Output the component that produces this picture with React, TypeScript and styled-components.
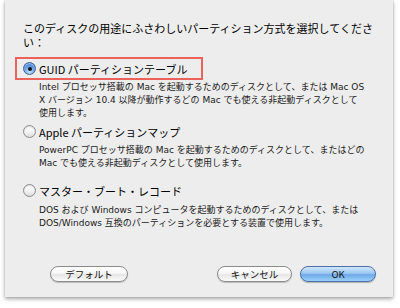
import React from "react";
import styled, { createGlobalStyle, css } from "styled-components";

const Global = createGlobalStyle`
  html, body { margin: 0; padding: 0; background: #ffffff; }
  body { font-family: "Noto Sans CJK JP", "Noto Sans", sans-serif; color: #000; }
`;

const Page = styled.div`
  width: 400px;
  height: 308px;
  padding-left: 5px;
  box-sizing: border-box;
`;

const Sheet = styled.div`
  width: 388px;
  height: 297px;
  box-sizing: border-box;
  background: #ededed;
  box-shadow: 0 2px 4px rgba(0, 0, 0, 0.35), 0 0 1px rgba(0, 0, 0, 0.25);
  display: flex;
  flex-direction: column;
  padding: 21px 0 15px 0;
`;

const Title = styled.div`
  font-size: 11px;
  line-height: 14px;
  padding-left: 18px;
  white-space: nowrap;
  margin-bottom: 8px;
`;

const Option = styled.div<{ $after: number }>`
  display: flex;
  flex-direction: column;
  margin-bottom: ${(p) => p.$after}px;
`;

const Row = styled.div<{ $highlight?: boolean }>`
  display: inline-flex;
  align-items: center;
  align-self: flex-start;
  height: 23px;
  box-sizing: border-box;
  margin-left: 10px;
  padding: 0 14px 0 6px;
  gap: 3px;
  border: 2px solid ${(p) => (p.$highlight ? "#ec6159" : "transparent")};
  font-size: 11px;
`;

const Radio = styled.span<{ $checked?: boolean }>`
  position: relative;
  width: 13px;
  height: 13px;
  box-sizing: border-box;
  border-radius: 50%;
  flex: none;
  ${(p) =>
    p.$checked
      ? css`
          border: 1px solid #42609a;
          background: radial-gradient(circle at 50% 80%, #c6e4ff 0%, #7fb3ef 35%, #3f7fd9 75%, #2f66c0 100%);
          box-shadow: inset 0 1px 1px rgba(255, 255, 255, 0.6);
          &::after {
            content: "";
            position: absolute;
            left: 50%;
            top: 50%;
            width: 4px;
            height: 4px;
            margin: -2px 0 0 -2px;
            border-radius: 50%;
            background: #111;
          }
        `
      : css`
          border: 1px solid #8c8c8c;
          background: linear-gradient(#ffffff, #f2f2f2 55%, #dcdcdc);
          box-shadow: inset 0 1px 1px rgba(0, 0, 0, 0.15);
        `}
`;

const Label = styled.span`
  white-space: nowrap;
  line-height: 14px;
`;

const Desc = styled.div<{ $top: number }>`
  font-family: "DejaVu Sans", "Noto Sans CJK JP", sans-serif;
  font-size: 9px;
  line-height: 13px;
  color: #1a1a1a;
  padding-left: 34px;
  margin-top: ${(p) => p.$top}px;
  white-space: nowrap;
`;

const Footer = styled.div`
  margin-top: auto;
  display: flex;
  justify-content: space-between;
  align-items: center;
  padding: 0 17px 0 45px;
`;

const Group = styled.div`
  display: flex;
  gap: 8px;
`;

const Button = styled.button<{ $primary?: boolean; $w: number }>`
  width: ${(p) => p.$w}px;
  height: 16px;
  box-sizing: border-box;
  border-radius: 8px;
  font-family: "Noto Sans CJK JP", "Noto Sans", sans-serif;
  font-size: 9.5px;
  line-height: 14px;
  padding: 0;
  color: #111;
  cursor: default;
  ${(p) =>
    p.$primary
      ? css`
          border: 1px solid #4c6fa8;
          background: linear-gradient(#cfe6fb 0%, #9cc8f2 45%, #6ea9e8 55%, #9ad0fa 100%);
          box-shadow: 0 1px 1px rgba(0, 0, 0, 0.25);
        `
      : css`
          border: 1px solid #8a8a8a;
          background: linear-gradient(#ffffff 0%, #f6f6f6 45%, #e6e6e6 55%, #fbfbfb 100%);
          box-shadow: 0 1px 1px rgba(0, 0, 0, 0.2);
        `}
`;

export default function App() {
  return (
    <Page>
      <Global />
      <Sheet>
        <Title>
          このディスクの用途にふさわしいパーティション方式を選択してくださ
          <br />い：
        </Title>

        <Option $after={0}>
          <Row $highlight>
            <Radio $checked />
            <Label>GUID パーティションテーブル</Label>
          </Row>
          <Desc $top={1}>
            Intel プロセッサ搭載の Mac を起動するためのディスクとして、または Mac OS
            <br />X バージョン 10.4 以降が動作するどの Mac でも使える非起動ディスクとして
            <br />使用します。
          </Desc>
        </Option>

        <Option $after={9}>
          <Row>
            <Radio />
            <Label>Apple パーティションマップ</Label>
          </Row>
          <Desc $top={1}>
            PowerPC プロセッサ搭載の Mac を起動するためのディスクとして、またはどの
            <br />Mac でも使える非起動ディスクとして使用します。
          </Desc>
        </Option>

        <Option $after={0}>
          <Row>
            <Radio />
            <Label>マスター・ブート・レコード</Label>
          </Row>
          <Desc $top={2}>
            DOS および Windows コンピュータを起動するためのディスクとして、または
            <br />DOS/Windows 互換のパーティションを必要とする装置で使用します。
          </Desc>
        </Option>

        <Footer>
          <Button $w={78}>デフォルト</Button>
          <Group>
            <Button $w={75}>キャンセル</Button>
            <Button $w={76} $primary>
              OK
            </Button>
          </Group>
        </Footer>
      </Sheet>
    </Page>
  );
}
